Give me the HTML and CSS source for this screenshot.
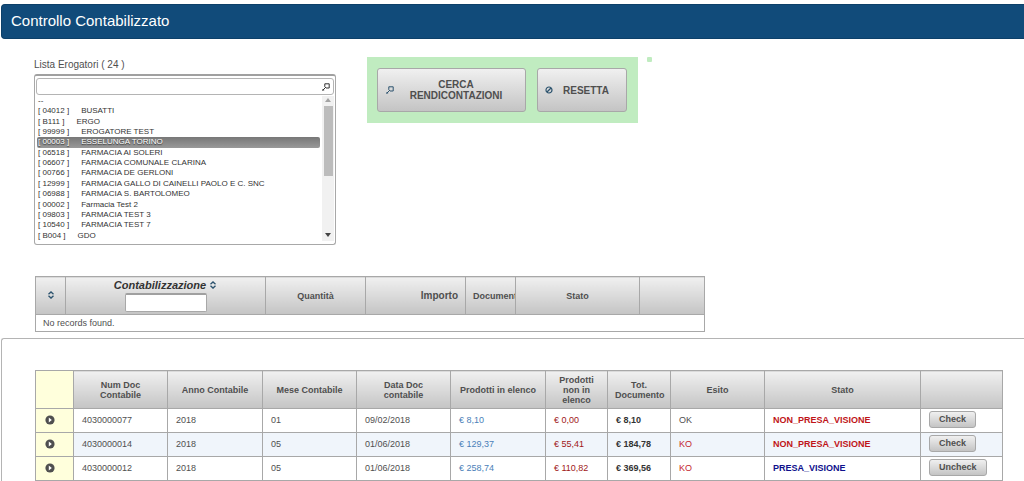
FILE: index.html
```html
<!DOCTYPE html>
<html lang="it">
<head>
<meta charset="utf-8">
<title>Controllo Contabilizzato</title>
<link rel="stylesheet" href="styles.css">
</head>
<body>
<svg class="sprite" aria-hidden="true">
  <symbol id="search" viewBox="0 0 8 8"><path d="M2.8.8h4.4v4.2H4L2.8 3.8zM3.4 4.6L.8 7.2M0 7h2.2" fill="none" stroke="currentColor"/></symbol>
  <symbol id="cancel" viewBox="0 0 8 8"><circle cx="4" cy="4" r="3" fill="none" stroke="currentColor" stroke-width="1.2"/><path d="M2 6L6 2" stroke="currentColor" stroke-width="1.2"/></symbol>
  <symbol id="sort" viewBox="0 0 8 8"><path d="M1.5 3.2L4 .9l2.5 2.3M1.5 4.8L4 7.1l2.5-2.3" fill="none" stroke="currentColor" stroke-width="1.3"/></symbol>
  <symbol id="toggle" viewBox="0 0 10 10"><circle cx="5" cy="5" r="4.6" fill="currentColor"/><path d="M3.8 2.6L6.8 5 3.8 7.4z" fill="#fff"/></symbol>
</svg>
<header class="titlebar"><h1>Controllo Contabilizzato</h1></header>
<main>
  <section class="filters">
    <div class="picker">
      <label for="filter">Lista Erogatori ( 24 )</label>
      <div class="listbox">
        <div class="search"><input id="filter" type="text"><svg class="icon"><use href="#search"/></svg></div>
        <div class="scroller">
          <ul class="options" role="listbox" aria-label="Lista Erogatori">
            <li role="option">--</li>
            <li role="option"><span>[ 04012 ]</span>BUSATTI</li>
            <li role="option"><span>[ B111 ]</span>ERGO</li>
            <li role="option"><span>[ 99999 ]</span>EROGATORE TEST</li>
            <li role="option" class="selected" aria-selected="true"><span>[ 00003 ]</span>ESSELUNGA TORINO</li>
            <li role="option"><span>[ 06518 ]</span>FARMACIA AI SOLERI</li>
            <li role="option"><span>[ 06607 ]</span>FARMACIA COMUNALE CLARINA</li>
            <li role="option"><span>[ 00766 ]</span>FARMACIA DE GERLONI</li>
            <li role="option"><span>[ 12999 ]</span>FARMACIA GALLO DI CAINELLI PAOLO E C. SNC</li>
            <li role="option"><span>[ 06988 ]</span>FARMACIA S. BARTOLOMEO</li>
            <li role="option"><span>[ 00002 ]</span>Farmacia Test 2</li>
            <li role="option"><span>[ 09803 ]</span>FARMACIA TEST 3</li>
            <li role="option"><span>[ 10540 ]</span>FARMACIA TEST 7</li>
            <li role="option"><span>[ B004 ]</span>GDO</li>
          </ul>
          <div class="scrollbar" aria-hidden="true"><i class="up"></i><i class="thumb"></i><i class="down"></i></div>
        </div>
      </div>
    </div>
    <div class="actions">
      <button class="btn big find" type="button"><svg class="icon"><use href="#search"/></svg><span>CERCA RENDICONTAZIONI</span></button>
      <button class="btn big reset" type="button"><svg class="icon"><use href="#cancel"/></svg><span>RESETTA</span></button>
    </div>
    <div class="dot"></div>
  </section>

  <table class="grid summary">
    <colgroup><col class="w30"><col class="w200"><col class="w100"><col class="w100"><col class="w50"><col class="w124"><col></colgroup>
    <thead><tr>
      <th><svg class="icon"><use href="#sort"/></svg></th>
      <th class="account"><label for="account">Contabilizzazione <svg class="icon"><use href="#sort"/></svg></label><input id="account" type="text"></th>
      <th>Quantità</th><th class="amount">Importo</th><th class="clip">Documenti</th><th>Stato</th><th></th>
    </tr></thead>
    <tbody><tr><td colspan="7">No records found.</td></tr></tbody>
  </table>

  <section class="panel">
    <table class="grid docs">
      <colgroup><col class="w38"><col class="w94"><col class="w95"><col class="w94"><col class="w94"><col class="w95"><col class="w62"><col class="w63"><col class="w94"><col class="w156"><col></colgroup>
      <thead><tr>
        <th class="toggle"></th><th>Num Doc Contabile</th><th>Anno Contabile</th><th>Mese Contabile</th><th>Data Doc contabile</th><th>Prodotti in elenco</th><th>Prodotti non in elenco</th><th>Tot. Documento</th><th>Esito</th><th>Stato</th><th></th>
      </tr></thead>
      <tbody>
        <tr><td class="toggle"><svg class="icon"><use href="#toggle"/></svg></td><td>4030000077</td><td>2018</td><td>01</td><td>09/02/2018</td><td class="blue">€ 8,10</td><td class="dark-red">€ 0,00</td><td class="total">€ 8,10</td><td>OK</td><td class="unseen">NON_PRESA_VISIONE</td><td><button class="btn small" type="button">Check</button></td></tr>
        <tr><td class="toggle"><svg class="icon"><use href="#toggle"/></svg></td><td>4030000014</td><td>2018</td><td>05</td><td>01/06/2018</td><td class="blue">€ 129,37</td><td class="dark-red">€ 55,41</td><td class="total">€ 184,78</td><td class="ko">KO</td><td class="unseen">NON_PRESA_VISIONE</td><td><button class="btn small" type="button">Check</button></td></tr>
        <tr><td class="toggle"><svg class="icon"><use href="#toggle"/></svg></td><td>4030000012</td><td>2018</td><td>05</td><td>01/06/2018</td><td class="blue">€ 258,74</td><td class="dark-red">€ 110,82</td><td class="total">€ 369,56</td><td class="ko">KO</td><td class="seen">PRESA_VISIONE</td><td><button class="btn small" type="button">Uncheck</button></td></tr>
      </tbody>
    </table>
  </section>
</main>
</body>
</html>
```

FILE: styles.css
```css
* { box-sizing: border-box; }
body {
  margin: 0;
  padding: 4px 0 0 1px;
  overflow: hidden;
  background: #fff;
  color: #4f4f4f;
  font: 9px/10px "Liberation Sans", Arial, sans-serif;
}
.sprite { display: none; }
.icon { width: 8px; height: 8px; color: #2c536e; flex: none; }

.titlebar {
  height: 35px;
  padding: 0 9px 2px;
  display: flex;
  align-items: center;
  background: #114b7a;
  border: 1px solid #0d4069;
  border-right: 0;
  border-radius: 4px 0 0 4px;
}
h1 { margin: 0; color: #fff; font-size: 15px; line-height: 18px; font-weight: normal; }

.filters { display: flex; align-items: flex-start; padding: 18px 0 0 33px; }
.picker { width: 302px; margin-right: 31px; }
.picker label { display: block; height: 17px; padding: 2px 0; font-size: 10px; line-height: 12px; }
.listbox {
  height: 171px;
  padding: 2px 1px 3px;
  display: flex;
  flex-direction: column;
  border: 1px solid #a8a8a8;
  border-top: 2px solid #a0a0a0;
  border-radius: 3px;
}
.search { display: flex; align-items: center; height: 17px; padding-right: 3px; border: 1px solid #b4b4b4; border-radius: 3px; }
.search input { flex: 1; min-width: 0; border: 0; outline: 0; background: none; font: inherit; }
.search .icon { color: #333; }
.scroller { flex: 1; display: flex; padding-top: 1px; }
.options {
  flex: 1;
  margin: 0;
  padding: 0 1px;
  list-style: none;
  display: grid;
  grid-auto-rows: 1fr;
  font-size: 8px;
  line-height: 10px;
  color: #333;
}
.options li { padding: 0 1px; white-space: nowrap; border-radius: 2px; }
.options span { margin-right: 12px; }
.options .selected { background: linear-gradient(#777, #999); color: #fff; text-shadow: 0 1px 1px #333; }
.scrollbar { width: 12px; margin-left: 1px; display: flex; flex-direction: column; align-items: center; background: #f1f1f1; }
.scrollbar i { border: 3px solid transparent; }
.scrollbar .up { margin-top: 2px; border-top: 0; border-bottom-color: #a3a3a3; border-bottom-width: 4px; }
.scrollbar .thumb { width: 9px; height: 70px; margin: 4px 0 auto; border: 0; background: #bcbcbc; }
.scrollbar .down { margin-bottom: 4px; border-bottom: 0; border-top-color: #444; border-top-width: 4px; }

.actions { display: flex; gap: 11px; padding: 11px 11px 11px 10px; background: #c0ecc0; }
.dot { width: 5px; height: 5px; margin-left: 9px; background: #c0ecc0; border-radius: 1px; }
.btn {
  display: flex;
  align-items: center;
  border: 1px solid #a8a8a8;
  border-radius: 3px;
  background: linear-gradient(#f0f0f0, #c4c4c4);
  color: #4f4f4f;
  font: bold 9px/11px "Liberation Sans", Arial, sans-serif;
}
.big { height: 44px; padding: 0 7px; font-size: 10px; }
.big span { flex: 1; text-align: center; }
.find { width: 149px; padding-left: 8px; }
.find span { padding: 0 4px; }
.reset { width: 90px; }
.small { height: 17px; padding: 0 9px; }

.grid { border-collapse: collapse; table-layout: fixed; }
.grid th, .grid td { border: 1px solid #a8a8a8; padding: 0 7px; }
.grid th { height: 38px; background: linear-gradient(#f0f0f0, #c4c4c4); font-weight: bold; }
.grid td { text-align: left; }
.summary { width: 100%; max-width: 670px; margin: 31px 0 0 34px; }
.summary td { height: 17px; }
.summary .account { font-size: 11px; line-height: 12px; font-style: italic; color: #333; }
.account label { display: block; height: 14px; }
.account input {
  display: block;
  width: 82px;
  height: 19px;
  margin: 0 auto;
  border: 1px solid #a8a8a8;
  border-top: 2px solid #a0a0a0;
  border-radius: 2px;
  background: #fff;
}
.summary .amount { text-align: right; font-size: 10px; }
.summary .clip { overflow: hidden; padding-right: 0; text-align: left; white-space: nowrap; }

.panel { margin-top: 6px; padding: 31px 21px 0 33px; border: 1px solid #b4b4b4; border-right: 0; border-radius: 3px 0 0 0; }
.docs { width: 100%; }
.docs td { height: 24px; padding: 0 7px 2px 8px; }
.docs tbody tr:nth-child(even) { background: #f0f5fb; }
.docs .toggle { background: #ffffdc; padding-left: 9px; }
.toggle .icon { width: 10px; height: 10px; display: block; color: #4f4f4f; }
.blue { color: #4a80b8; }
.dark-red { color: #a01818; }
.ko { color: #c41e2c; }
.total { font-weight: bold; color: #333; }
.unseen { font-weight: bold; color: #c01418; }
.seen { font-weight: bold; color: #10108c; }
.w30 { width: 30px; } .w38 { width: 38px; } .w50 { width: 50px; }
.w62 { width: 62px; } .w63 { width: 63px; } .w94 { width: 94px; }
.w95 { width: 95px; } .w100 { width: 100px; } .w124 { width: 124px; }
.w156 { width: 156px; } .w200 { width: 200px; }
```
